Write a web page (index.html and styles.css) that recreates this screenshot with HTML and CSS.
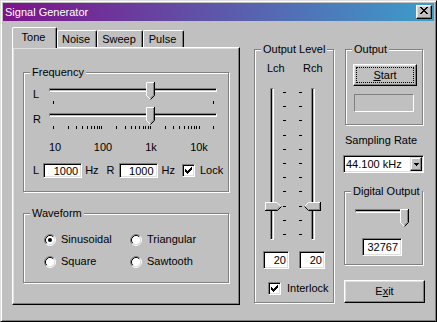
FILE: index.html
```html
<!DOCTYPE html>
<html lang="en">
<head>
  <meta charset="UTF-8">
  <meta name="viewport" content="width=device-width, initial-scale=1.0">
  <title>Signal Generator</title>
  <link rel="stylesheet" href="styles.css">
</head>
<body>
<div class="window">
  <div class="titlebar">
    <span class="title">Signal Generator</span>
    <span class="caption-btn">
      <svg width="8" height="7" viewBox="0 0 8 7" shape-rendering="crispEdges" fill="#000">
        <rect x="0" y="0" width="2" height="1"/><rect x="6" y="0" width="2" height="1"/>
        <rect x="1" y="1" width="2" height="1"/><rect x="5" y="1" width="2" height="1"/>
        <rect x="2" y="2" width="4" height="1"/>
        <rect x="3" y="3" width="2" height="1"/>
        <rect x="2" y="4" width="4" height="1"/>
        <rect x="1" y="5" width="2" height="1"/><rect x="5" y="5" width="2" height="1"/>
        <rect x="0" y="6" width="2" height="1"/><rect x="6" y="6" width="2" height="1"/>
      </svg>
    </span>
  </div>

  <div class="client">
    <!-- left: tabbed panel -->
    <div class="tab-col">
      <div class="tab-strip">
        <div class="tab tab-active tab-tone">Tone</div>
        <div class="tab tab-noise">Noise</div>
        <div class="tab tab-sweep">Sweep</div>
        <div class="tab tab-pulse">Pulse</div>
      </div>
      <div class="tab-panel">
        <fieldset class="group freq-group">
          <legend>Frequency</legend>
          <div class="slider-row">
            <span class="slider-label">L</span>
            <div class="hslider">
              <div class="htrack"></div>
              <span class="tick" style="left: 4px"></span>
              <span class="tick" style="left: 164px"></span>
              <svg class="thumb-h" style="left: 97px"><use href="#thumb-down"/></svg>
            </div>
          </div>
          <div class="slider-row">
            <span class="slider-label">R</span>
            <div class="hslider">
              <div class="htrack"></div>
              <span class="tick" style="left: 4px"></span>
              <span class="tick" style="left: 19px"></span>
              <span class="tick" style="left: 27px"></span>
              <span class="tick" style="left: 33px"></span>
              <span class="tick" style="left: 38px"></span>
              <span class="tick" style="left: 42px"></span>
              <span class="tick" style="left: 45px"></span>
              <span class="tick" style="left: 48px"></span>
              <span class="tick" style="left: 50px"></span>
              <span class="tick" style="left: 52px"></span>
              <span class="tick" style="left: 67px"></span>
              <span class="tick" style="left: 76px"></span>
              <span class="tick" style="left: 82px"></span>
              <span class="tick" style="left: 86px"></span>
              <span class="tick" style="left: 90px"></span>
              <span class="tick" style="left: 94px"></span>
              <span class="tick" style="left: 96px"></span>
              <span class="tick" style="left: 99px"></span>
              <span class="tick" style="left: 101px"></span>
              <span class="tick" style="left: 116px"></span>
              <span class="tick" style="left: 124px"></span>
              <span class="tick" style="left: 130px"></span>
              <span class="tick" style="left: 135px"></span>
              <span class="tick" style="left: 139px"></span>
              <span class="tick" style="left: 142px"></span>
              <span class="tick" style="left: 145px"></span>
              <span class="tick" style="left: 147px"></span>
              <span class="tick" style="left: 150px"></span>
              <span class="tick" style="left: 164px"></span>
              <svg class="thumb-h" style="left: 97px"><use href="#thumb-down"/></svg>
            </div>
          </div>
          <div class="scale-row">
            <span>10</span><span>100</span><span>1k</span><span>10k</span>
          </div>
          <div class="freq-edits">
            <span>L</span>
            <input class="edit freq-edit edit-first" type="text" value="1000" readonly>
            <span class="hz">Hz</span>
            <span class="r-label">R</span>
            <input class="edit freq-edit" type="text" value="1000" readonly>
            <span class="hz hz-second">Hz</span>
            <span class="checkbox lock-box"><svg width="7" height="7"><use href="#check"/></svg></span>
            <span class="lock-label">Lock</span>
          </div>
        </fieldset>

        <fieldset class="group wave-group">
          <legend>Waveform</legend>
          <div class="radio-grid">
            <label class="radio-item"><svg class="radio"><use href="#radio-on"/></svg>Sinusoidal</label>
            <label class="radio-item"><svg class="radio"><use href="#radio-off"/></svg>Triangular</label>
            <label class="radio-item"><svg class="radio"><use href="#radio-off"/></svg>Square</label>
            <label class="radio-item"><svg class="radio"><use href="#radio-off"/></svg>Sawtooth</label>
          </div>
        </fieldset>
      </div>
    </div>

    <!-- middle: output level -->
    <div class="level-col">
      <fieldset class="group level-group">
        <legend>Output Level</legend>
        <div class="channel-labels">
          <span class="ch-l">Lch</span>
          <span>Rch</span>
        </div>
        <div class="vsliders">
          <div class="vslider vslider-l">
            <div class="vtrack"></div>
            <span class="vtick" style="top: 4px"></span>
            <span class="vtick" style="top: 18px"></span>
            <span class="vtick" style="top: 32px"></span>
            <span class="vtick" style="top: 47px"></span>
            <span class="vtick" style="top: 61px"></span>
            <span class="vtick" style="top: 75px"></span>
            <span class="vtick" style="top: 89px"></span>
            <span class="vtick" style="top: 103px"></span>
            <span class="vtick" style="top: 118px"></span>
            <span class="vtick" style="top: 132px"></span>
            <span class="vtick" style="top: 146px"></span>
            <svg class="thumb-v" style="top: 114px"><use href="#thumb-right"/></svg>
          </div>
          <div class="vslider vslider-r">
            <div class="vtrack"></div>
            <span class="vtick" style="top: 4px"></span>
            <span class="vtick" style="top: 18px"></span>
            <span class="vtick" style="top: 32px"></span>
            <span class="vtick" style="top: 47px"></span>
            <span class="vtick" style="top: 61px"></span>
            <span class="vtick" style="top: 75px"></span>
            <span class="vtick" style="top: 89px"></span>
            <span class="vtick" style="top: 103px"></span>
            <span class="vtick" style="top: 118px"></span>
            <span class="vtick" style="top: 132px"></span>
            <span class="vtick" style="top: 146px"></span>
            <svg class="thumb-v" style="top: 114px"><use href="#thumb-left"/></svg>
          </div>
        </div>
        <div class="level-edits">
          <input class="edit level-edit" type="text" value="20" readonly>
          <input class="edit level-edit" type="text" value="20" readonly>
        </div>
        <div class="interlock">
          <span class="checkbox"><svg width="7" height="7"><use href="#check"/></svg></span>
          <span>Interlock</span>
        </div>
      </fieldset>
    </div>

    <!-- right column -->
    <div class="right-col">
      <fieldset class="group output-group">
        <legend>Output</legend>
        <button class="btn start-btn" type="button"><u>S</u>tart</button>
        <div class="status-box"></div>
      </fieldset>

      <div class="rate-label">Sampling Rate</div>
      <div class="combo">
        <span class="combo-text">44.100 kHz</span>
        <span class="combo-btn">
          <svg width="5" height="3" viewBox="0 0 5 3" shape-rendering="crispEdges" fill="#000">
            <rect x="0" y="0" width="5" height="1"/>
            <rect x="1" y="1" width="3" height="1"/>
            <rect x="2" y="2" width="1" height="1"/>
          </svg>
        </span>
      </div>

      <fieldset class="group digital-group">
        <legend>Digital Output</legend>
        <div class="hslider digital-slider">
          <div class="htrack"></div>
          <svg class="thumb-h" style="left: 45px"><use href="#thumb-down"/></svg>
        </div>
        <input class="edit digital-edit" type="text" value="32767" readonly>
      </fieldset>

      <button class="btn exit-btn" type="button">E<u>x</u>it</button>
    </div>
  </div>
</div>

<svg class="svg-defs" width="0" height="0">
  <defs>
    <symbol id="thumb-down" viewBox="0 0 9 18">
      <polygon points="0,0 9,0 9,13 4.5,17.5 0,13" fill="#c0c0c0"/>
      <polyline points="0.5,13.5 0.5,0.5 8,0.5" fill="none" stroke="#fff"/>
      <line x1="0.5" y1="13.5" x2="4.5" y2="17.5" stroke="#fff"/>
      <polyline points="8.5,0 8.5,13.5 4.5,17.5" fill="none" stroke="#000"/>
      <polyline points="7.5,1 7.5,13 4.5,16" fill="none" stroke="#808080"/>
    </symbol>
    <symbol id="thumb-right" viewBox="0 0 17 9">
      <polygon points="0,0 12,0 16.5,4.5 12,9 0,9" fill="#c0c0c0"/>
      <polyline points="0.5,8.5 0.5,0.5 12,0.5 16,4.5" fill="none" stroke="#fff"/>
      <polyline points="0,8.5 12.5,8.5 16.5,4.5" fill="none" stroke="#000"/>
      <polyline points="1,7.5 12,7.5 15,4.5" fill="none" stroke="#808080"/>
    </symbol>
    <symbol id="thumb-left" viewBox="0 0 17 9">
      <polygon points="17,0 5,0 0.5,4.5 5,9 17,9" fill="#c0c0c0"/>
      <polyline points="0.5,4.5 4.5,0.5 16,0.5" fill="none" stroke="#fff"/>
      <polyline points="0.5,4.5 4.5,8.5 17,8.5" fill="none" stroke="#000"/>
      <line x1="16.5" y1="0" x2="16.5" y2="9" stroke="#000"/>
      <polyline points="5,7.5 15.5,7.5 15.5,1" fill="none" stroke="#808080"/>
    </symbol>
    <symbol id="radio-off" viewBox="0 0 12 12">
      <circle cx="6" cy="6" r="4.5" fill="#fff"/>
      <path d="M2.11 9.89 A5.5 5.5 0 0 1 9.89 2.11" fill="none" stroke="#808080"/>
      <path d="M9.89 2.11 A5.5 5.5 0 0 1 2.11 9.89" fill="none" stroke="#fff"/>
      <path d="M2.82 9.18 A4.5 4.5 0 0 1 9.18 2.82" fill="none" stroke="#000"/>
      <path d="M9.18 2.82 A4.5 4.5 0 0 1 2.82 9.18" fill="none" stroke="#dfdfdf"/>
    </symbol>
    <symbol id="radio-on" viewBox="0 0 12 12">
      <use href="#radio-off"/>
      <circle cx="6" cy="6" r="2" fill="#000"/>
    </symbol>
    <symbol id="check" viewBox="0 0 7 7">
      <g shape-rendering="crispEdges" fill="#000">
        <rect x="6" y="0" width="1" height="1"/>
        <rect x="5" y="1" width="2" height="1"/>
        <rect x="0" y="2" width="1" height="1"/><rect x="4" y="2" width="3" height="1"/>
        <rect x="0" y="3" width="2" height="1"/><rect x="3" y="3" width="3" height="1"/>
        <rect x="0" y="4" width="5" height="1"/>
        <rect x="1" y="5" width="3" height="1"/>
        <rect x="2" y="6" width="1" height="1"/>
      </g>
    </symbol>
  </defs>
</svg>
</body>
</html>
```

FILE: styles.css
```css
body {
  margin: 0;
  background: #c0c0c0;
  font-family: "Liberation Sans", Arial, sans-serif;
  font-size: 11px;
  line-height: 13px;
  color: #000;
}

.window {
  width: 437px;
  height: 322px;
  box-sizing: border-box;
  border: 1px solid;
  border-color: #dfdfdf #000 #000 #dfdfdf;
  box-shadow: inset 1px 1px #fff, inset -1px -1px #808080;
  padding: 2px;
  background: #c0c0c0;
}

.titlebar {
  height: 18px;
  display: flex;
  align-items: center;
  justify-content: space-between;
  padding: 0 2px;
  background: linear-gradient(to right, #7e1289, #3c9dca);
  color: #fff;
}

.caption-btn {
  width: 16px;
  height: 14px;
  box-sizing: border-box;
  display: flex;
  justify-content: center;
  align-items: flex-start;
  padding-top: 1px;
  border: 1px solid;
  border-color: #fff #000 #000 #fff;
  box-shadow: inset -1px -1px #808080, inset 1px 1px #dfdfdf;
  background: #c0c0c0;
}

.caption-btn svg {
  display: block;
}

.client {
  display: flex;
  align-items: flex-start;
  padding-left: 9px;
}

/* tabs */
.tab-col {
  width: 228px;
  margin-top: 6px;
}

.tab-strip {
  display: flex;
  align-items: flex-end;
  height: 20px;
}

.tab {
  height: 17px;
  box-sizing: border-box;
  padding: 2px 2px 0 0;
  border-top: 1px solid #fff;
  border-left: 1px solid #fff;
  border-right: 1px solid #000;
  border-radius: 2px 2px 0 0;
  box-shadow: inset -1px 0 #808080;
  text-align: center;
  background: #c0c0c0;
}

.tab-active {
  position: relative;
  z-index: 1;
  height: 21px;
  margin-bottom: -1px;
  padding-top: 3px;
}

.tab-tone { width: 45px; }
.tab-noise { width: 40px; }
.tab-sweep { width: 46px; }
.tab-pulse { width: 41px; }

.tab-panel {
  height: 258px;
  box-sizing: border-box;
  padding: 18px 10px 0;
  border: 1px solid;
  border-color: #fff #000 #000 #fff;
  box-shadow: inset -1px -1px #808080, inset 1px 1px #dfdfdf;
}

/* group boxes */
.group {
  margin: 0;
  padding: 0;
  min-width: 0;
  border: 1px solid #808080;
  box-shadow: 1px 1px 0 #fff, inset 1px 1px 0 #fff;
}

.group legend {
  margin-left: 6px;
  padding: 0 2px;
  background: #c0c0c0;
  line-height: 13px;
}

.freq-group {
  padding-bottom: 13px;
}

.slider-row {
  display: flex;
  padding-left: 9px;
  margin-top: 3px;
}

.slider-label {
  width: 16px;
  margin-top: 6px;
}

.hslider {
  position: relative;
  width: 168px;
  height: 22px;
}

.htrack {
  margin-top: 6px;
  height: 4px;
  box-sizing: border-box;
  border: 1px solid;
  border-color: #808080 #fff #fff #808080;
  background: linear-gradient(#000 1px, #c0c0c0 1px);
}

.tick {
  position: absolute;
  top: 19px;
  width: 1px;
  height: 3px;
  background: #000;
}

.thumb-h {
  position: absolute;
  top: 0;
  width: 9px;
  height: 18px;
}

.scale-row {
  display: flex;
  margin-top: 12px;
  padding-left: 7px;
}

.scale-row span {
  width: 48px;
  text-align: center;
}

.freq-edits {
  display: flex;
  align-items: center;
  margin-top: 9px;
  padding-left: 9px;
  height: 15px;
}

.edit {
  box-sizing: border-box;
  margin: 0;
  padding: 0 3px 0 0;
  border: 1px solid;
  border-color: #808080 #fff #fff #808080;
  box-shadow: inset 1px 1px #000, inset -1px -1px #dfdfdf;
  background: #fff;
  font: inherit;
  color: #000;
  text-align: right;
  outline: none;
}

.freq-edit {
  width: 39px;
  height: 15px;
  margin-left: 4px;
}

.hz { margin-left: 3px; }
.hz-second { margin-left: 4px; }
.r-label { margin-left: 8px; }
.lock-box { margin-left: 7px; }
.lock-label { margin-left: 5px; }

.checkbox {
  width: 13px;
  height: 13px;
  box-sizing: border-box;
  display: flex;
  padding: 2px;
  border: 1px solid;
  border-color: #808080 #fff #fff #808080;
  box-shadow: inset 1px 1px #000, inset -1px -1px #dfdfdf;
  background: #fff;
}

.checkbox svg {
  display: block;
}

.wave-group {
  margin-top: 15px;
  padding-bottom: 14px;
}

.radio-grid {
  display: grid;
  grid-template-columns: 86px auto;
  row-gap: 9px;
  margin-top: 13px;
  padding-left: 20px;
}

.radio-item {
  display: flex;
  align-items: center;
  gap: 5px;
}

.radio {
  width: 12px;
  height: 12px;
}

/* output level */
.level-col {
  width: 80px;
  margin-left: 14px;
  margin-top: 22px;
}

.level-group {
  padding-bottom: 7px;
}

.channel-labels {
  display: flex;
  margin-top: 6px;
  padding-left: 12px;
}

.ch-l {
  width: 36px;
}

.vsliders {
  display: flex;
  gap: 12px;
  margin-top: 13px;
  padding-left: 10px;
}

.vslider {
  position: relative;
  width: 22px;
  height: 152px;
}

.vtrack {
  width: 4px;
  height: 152px;
  box-sizing: border-box;
  border: 1px solid;
  border-color: #808080 #fff #fff #808080;
  background: linear-gradient(to right, #000 1px, #c0c0c0 1px);
}

.vslider-l .vtrack { margin-left: 5px; }
.vslider-r .vtrack { margin-left: 12px; }

.vtick {
  position: absolute;
  width: 3px;
  height: 1px;
  background: #000;
}

.vslider-l .vtick { left: 18px; }
.vslider-r .vtick { left: 0; }

.thumb-v {
  position: absolute;
  width: 17px;
  height: 9px;
}

.vslider-l .thumb-v { left: 0; }
.vslider-r .thumb-v { left: 5px; }

.level-edits {
  display: flex;
  gap: 10px;
  margin-top: 11px;
  padding-left: 8px;
}

.level-edit {
  width: 26px;
  height: 18px;
  padding-right: 2px;
}

.interlock {
  display: flex;
  align-items: center;
  gap: 6px;
  margin-top: 13px;
  padding-left: 13px;
}

/* right column */
.right-col {
  width: 82px;
  margin-left: 9px;
  margin-top: 22px;
}

.output-group {
  width: 78px;
  margin-left: 2px;
  padding-bottom: 12px;
  box-sizing: border-box;
}

.btn {
  display: block;
  box-sizing: border-box;
  padding: 0;
  border: 1px solid;
  border-color: #fff #000 #000 #fff;
  box-shadow: inset -1px -1px #808080, inset 1px 1px #dfdfdf;
  background: #c0c0c0;
  font: inherit;
  color: #000;
  text-align: center;
}

.start-btn {
  width: 64px;
  height: 22px;
  margin: 8px 0 0 7px;
  outline: 1px dotted #000;
  outline-offset: -4px;
}

.status-box {
  width: 60px;
  height: 18px;
  box-sizing: border-box;
  margin: 8px 0 0 8px;
  border: 1px solid;
  border-color: #808080 #fff #fff #808080;
}

.rate-label {
  margin-top: 9px;
  padding-left: 2px;
}

.combo {
  display: flex;
  align-items: center;
  justify-content: space-between;
  width: 81px;
  height: 18px;
  box-sizing: border-box;
  margin-top: 8px;
  border: 1px solid;
  border-color: #808080 #fff #fff #808080;
  box-shadow: inset 1px 1px #000, inset -1px -1px #dfdfdf;
  background: #fff;
  padding: 1px;
}

.combo-text {
  padding-left: 1px;
}

.combo-btn {
  width: 12px;
  height: 14px;
  box-sizing: border-box;
  display: flex;
  justify-content: center;
  align-items: center;
  border: 1px solid;
  border-color: #dfdfdf #000 #000 #dfdfdf;
  box-shadow: inset -1px -1px #808080, inset 1px 1px #fff;
  background: #c0c0c0;
}

.combo-btn svg {
  display: block;
}

.digital-group {
  width: 79px;
  margin-top: 12px;
  margin-left: 1px;
  padding-bottom: 8px;
  box-sizing: border-box;
}

.digital-slider {
  width: 54px;
  height: 18px;
  margin: 11px 0 0 10px;
}

.digital-edit {
  display: block;
  width: 40px;
  height: 18px;
  margin: 11px 0 0 17px;
  padding-right: 3px;
}

.exit-btn {
  width: 81px;
  height: 23px;
  margin: 15px 0 0 1px;
}

.svg-defs {
  display: block;
  overflow: hidden;
}
```
